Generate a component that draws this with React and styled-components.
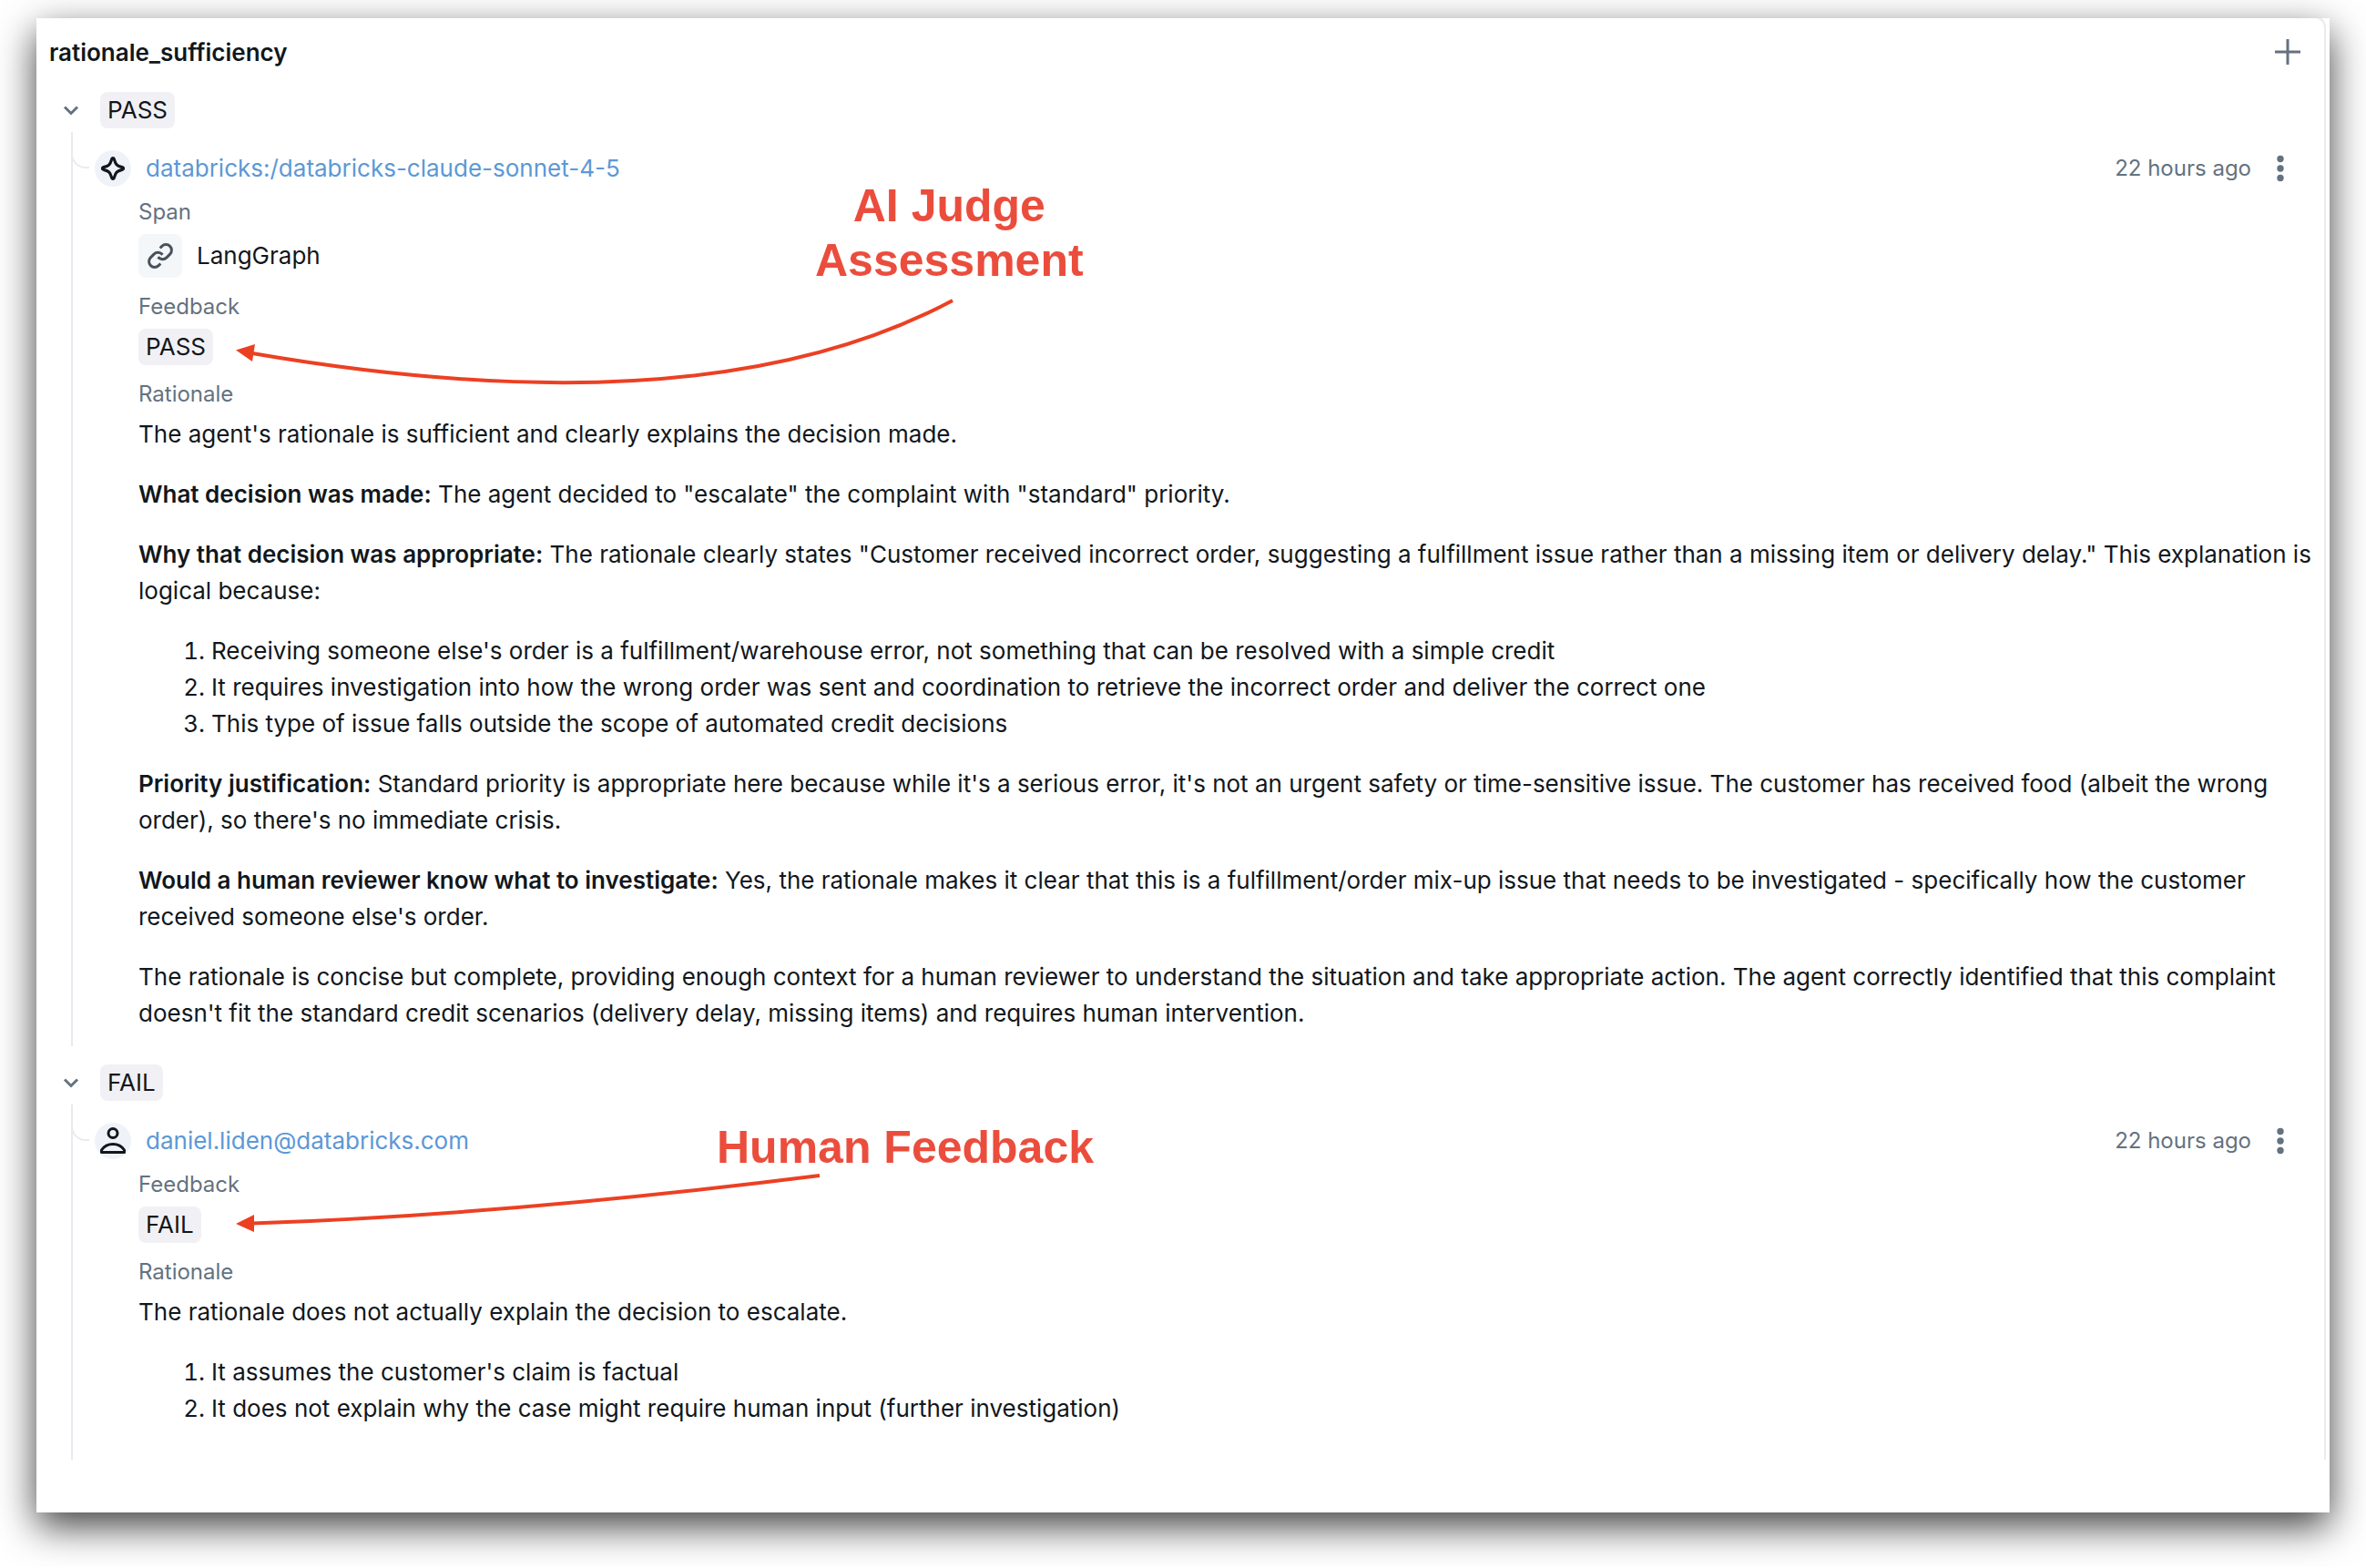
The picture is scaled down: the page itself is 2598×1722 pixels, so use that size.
import React from "react";
import styled, { createGlobalStyle } from "styled-components";

const color = {
  text: "#11171c",
  muted: "#64727f",
  link: "#5c98d6",
  tag: "#f1f1f5",
  chip: "#f4f7f9",
  avatar: "#eff3f9",
  line: "#e8e8ef",
  edge: "#ebebec",
  callout: "#eb4d3d",
  arrow: "#ec4023",
};

const GlobalStyle = createGlobalStyle`
  *, *::before, *::after { box-sizing: border-box; }
  body {
    margin: 0;
    background: #fff;
    color: ${color.text};
    font-family: Inter, "Liberation Sans", sans-serif;
    font-size: 26px;
    line-height: 40px;
  }
`;

const Page = styled.main`
  padding: 20px 40px 60px;
`;

const Panel = styled.section`
  position: relative;
  overflow: hidden;
  padding: 0 4px 58px 0;
`;

const Frame = styled.div`
  background: #fff;
  box-shadow: 0 15px 40px rgba(0, 0, 0, 0.75);
`;

const Card = styled.div`
  margin-top: -2px;
  padding: 15px 24px 0 14px;
  border: solid ${color.edge};
  border-width: 2px 2px 0 0;
  border-top-right-radius: 12px;
`;

const Header = styled.header`
  display: flex;
  align-items: center;
  justify-content: space-between;
  height: 46px;
  margin-bottom: 20px;
`;

const Title = styled.h2`
  margin: 0;
  font-size: 26px;
  font-weight: 600;
`;

const IconButton = styled.button`
  display: flex;
  align-items: center;
  justify-content: center;
  flex: none;
  width: ${(p) => (p.$wide ? 48 : 32)}px;
  height: 40px;
  padding: 0;
  border: 0;
  background: none;
  color: ${color.muted};
  cursor: pointer;
`;

const Groups = styled.div`
  display: flex;
  flex-direction: column;
  gap: 20px;
`;

const GroupHeader = styled.div`
  display: flex;
  align-items: center;
  gap: 16px;
  margin-bottom: 4px;
  padding-left: 8px;
`;

const Tag = styled.span`
  display: inline-block;
  padding: 0 8px;
  border-radius: 8px;
  background: ${color.tag};
`;

const GroupBody = styled.div`
  position: relative;
  margin-left: 24px;
  padding: 20px 0 ${(p) => (p.$endsWithList ? 36 : 16)}px;
  border-left: 2px solid ${color.line};
`;

const Elbow = styled.span`
  position: absolute;
  top: 20px;
  left: -2px;
  width: 20px;
  height: 20px;
  border: solid ${color.edge};
  border-width: 0 0 2px 2px;
  border-bottom-left-radius: 16px;
`;

const EntryHeader = styled.div`
  display: flex;
  align-items: center;
  padding-left: 24px;
`;

const Avatar = styled.span`
  display: flex;
  align-items: center;
  justify-content: center;
  width: 40px;
  height: 40px;
  margin-right: 16px;
  border-radius: 50%;
  background: ${color.avatar};
`;

const Source = styled.a`
  color: ${color.link};
  text-decoration: none;
`;

const Time = styled.time`
  margin-left: auto;
  margin-right: 8px;
  color: ${color.muted};
  font-size: 24px;
`;

const Fields = styled.dl`
  display: flex;
  flex-direction: column;
  gap: 16px;
  margin: 12px 0 0;
  padding-left: 72px;
`;

const Label = styled.dt`
  margin-bottom: 8px;
  color: ${color.muted};
  font-size: 24px;
  line-height: 32px;
`;

const Value = styled.dd`
  display: flex;
  align-items: center;
  gap: 16px;
  margin: 0;
`;

const Chip = styled.span`
  display: flex;
  align-items: center;
  justify-content: center;
  width: 48px;
  height: 48px;
  border-radius: 8px;
  background: ${color.chip};
  color: #47525d;
`;

const Prose = styled.dd`
  display: flex;
  flex-direction: column;
  gap: 26px;
  margin: 0 -16px 0 0;

  p { margin: 0; }
  ol { margin: 0; padding-left: 80px; }
  strong { font-weight: 600; }
`;

const Callout = styled.div`
  position: absolute;
  top: ${(p) => p.$top}px;
  left: ${(p) => p.$left}px;
  color: ${color.callout};
  font: bold 50px/60px "Liberation Sans", Arial, sans-serif;
  text-align: center;
  white-space: pre-line;
`;

const Arrow = styled.svg`
  position: absolute;
  top: ${(p) => p.$top}px;
  left: 172px;
  pointer-events: none;
`;

const ChevronIcon = () => (
  <svg width="32" height="32" viewBox="0 0 32 32" fill="none" stroke="currentColor" strokeWidth="3" aria-hidden="true">
    <path d="M9 12.5 16 19.5 23 12.5" />
  </svg>
);

const PlusIcon = () => (
  <svg width="32" height="32" viewBox="0 0 32 32" fill="none" stroke="currentColor" strokeWidth="3" aria-hidden="true">
    <path d="M16 1v28M2 15h28" />
  </svg>
);

const KebabIcon = () => (
  <svg width="32" height="32" viewBox="0 0 32 32" fill="currentColor" aria-hidden="true">
    <circle cx="16" cy="5.5" r="3.7" />
    <circle cx="16" cy="16" r="3.7" />
    <circle cx="16" cy="26.5" r="3.7" />
  </svg>
);

const SparkleIcon = () => (
  <svg width="32" height="32" viewBox="0 0 32 32" fill="none" stroke={color.text} strokeWidth="3.2" strokeLinejoin="round" aria-hidden="true">
    <path d="M16 4.5Q17 4.5 17.6 6.6C19 11.6 20.4 13 25.4 14.4Q27.5 15 27.5 16T25.4 17.6C20.4 19 19 20.4 17.6 25.4Q17 27.5 16 27.5T14.4 25.4C13 20.4 11.6 19 6.6 17.6Q4.5 17 4.5 16T6.6 14.4C11.6 13 13 11.6 14.4 6.6Q15 4.5 16 4.5Z" />
  </svg>
);

const UserIcon = () => (
  <svg width="32" height="32" viewBox="0 0 32 32" fill="none" stroke={color.text} strokeWidth="3" strokeLinejoin="round" aria-hidden="true">
    <circle cx="16" cy="7.5" r="5" />
    <path d="M3.5 28.5v-2.5C6.5 21.5 11 19.5 16 19.5s9.5 2 12.5 6.5v2.5Z" />
  </svg>
);

const LinkIcon = () => (
  <svg width="30" height="30" viewBox="0 0 24 24" fill="none" stroke="currentColor" strokeWidth="2.4" aria-hidden="true">
    <path d="M10 13a5 5 0 0 0 7.54.54l3-3a5 5 0 0 0-7.07-7.07l-1.72 1.71" />
    <path d="M14 11a5 5 0 0 0-7.54-.54l-3 3a5 5 0 0 0 7.07 7.07l1.71-1.71" />
  </svg>
);

function Group({ value, icon, source, endsWithList, children, callout }) {
  return (
    <section>
      <GroupHeader>
        <IconButton type="button" aria-label={`Toggle ${value}`} aria-expanded="true">
          <ChevronIcon />
        </IconButton>
        <Tag>{value}</Tag>
      </GroupHeader>
      <GroupBody $endsWithList={endsWithList}>
        <Elbow />
        <EntryHeader>
          <Avatar>{icon}</Avatar>
          <Source href="#">{source}</Source>
          <Time>22 hours ago</Time>
          <IconButton type="button" $wide aria-label="More actions">
            <KebabIcon />
          </IconButton>
        </EntryHeader>
        <Fields>{children}</Fields>
        {callout}
      </GroupBody>
    </section>
  );
}

function Feedback({ value }) {
  return (
    <div>
      <Label>Feedback</Label>
      <Value>
        <Tag>{value}</Tag>
      </Value>
    </div>
  );
}

function Rationale({ children }) {
  return (
    <div>
      <Label>Rationale</Label>
      <Prose>{children}</Prose>
    </div>
  );
}

export default function App() {
  return (
    <Page>
      <GlobalStyle />
      <Frame>
        <Panel>
          <Card>
            <Header>
              <Title>rationale_sufficiency</Title>
              <IconButton type="button" aria-label="Add assessment">
                <PlusIcon />
              </IconButton>
            </Header>
            <Groups>
              <Group
                value="PASS"
                icon={<SparkleIcon />}
                source="databricks:/databricks-claude-sonnet-4-5"
                callout={
                  <>
                    <Callout $top={51} $left={815}>{"AI Judge\nAssessment"}</Callout>
                    <Arrow $top={174} width="810" height="110" viewBox="0 0 810 110" aria-hidden="true">
                      <path d="M794 11Q525 155 25 69" fill="none" stroke={color.arrow} strokeWidth="4" />
                      <path d="M7 65.5 28 59 25 78Z" fill={color.arrow} />
                    </Arrow>
                  </>
                }
              >
                <div>
                  <Label>Span</Label>
                  <Value>
                    <Chip>
                      <LinkIcon />
                    </Chip>
                    LangGraph
                  </Value>
                </div>
                <Feedback value="PASS" />
                <Rationale>
                  <p>The agent's rationale is sufficient and clearly explains the decision made.</p>
                  <p>
                    <strong>What decision was made:</strong> The agent decided to "escalate" the complaint with
                    "standard" priority.
                  </p>
                  <p>
                    <strong>Why that decision was appropriate:</strong> The rationale clearly states "Customer received
                    incorrect order, suggesting a fulfillment issue rather than a missing item or delivery delay." This
                    explanation is logical because:
                  </p>
                  <ol>
                    <li>
                      Receiving someone else's order is a fulfillment/warehouse error, not something that can be
                      resolved with a simple credit
                    </li>
                    <li>
                      It requires investigation into how the wrong order was sent and coordination to retrieve the
                      incorrect order and deliver the correct one
                    </li>
                    <li>This type of issue falls outside the scope of automated credit decisions</li>
                  </ol>
                  <p>
                    <strong>Priority justification:</strong> Standard priority is appropriate here because while it's a
                    serious error, it's not an urgent safety or time-sensitive issue. The customer has received food
                    (albeit the wrong order), so there's no immediate crisis.
                  </p>
                  <p>
                    <strong>Would a human reviewer know what to investigate:</strong> Yes, the rationale makes it clear
                    that this is a fulfillment/order mix-up issue that needs to be investigated - specifically how the
                    customer received someone else's order.
                  </p>
                  <p>
                    The rationale is concise but complete, providing enough context for a human reviewer to understand
                    the situation and take appropriate action. The agent correctly identified that this complaint
                    doesn't fit the standard credit scenarios (delivery delay, missing items) and requires human
                    intervention.
                  </p>
                </Rationale>
              </Group>
              <Group
                value="FAIL"
                icon={<UserIcon />}
                source="daniel.liden@databricks.com"
                endsWithList
                callout={
                  <>
                    <Callout $top={17} $left={707}>Human Feedback</Callout>
                    <Arrow $top={66} width="670" height="90" viewBox="0 0 670 90" aria-hidden="true">
                      <path d="M648 12Q306 55 25 64.5" fill="none" stroke={color.arrow} strokeWidth="4" />
                      <path d="M7 65 27 55 27 74Z" fill={color.arrow} />
                    </Arrow>
                  </>
                }
              >
                <Feedback value="FAIL" />
                <Rationale>
                  <p>The rationale does not actually explain the decision to escalate.</p>
                  <ol>
                    <li>It assumes the customer's claim is factual</li>
                    <li>It does not explain why the case might require human input (further investigation)</li>
                  </ol>
                </Rationale>
              </Group>
            </Groups>
          </Card>
        </Panel>
      </Frame>
    </Page>
  );
}
